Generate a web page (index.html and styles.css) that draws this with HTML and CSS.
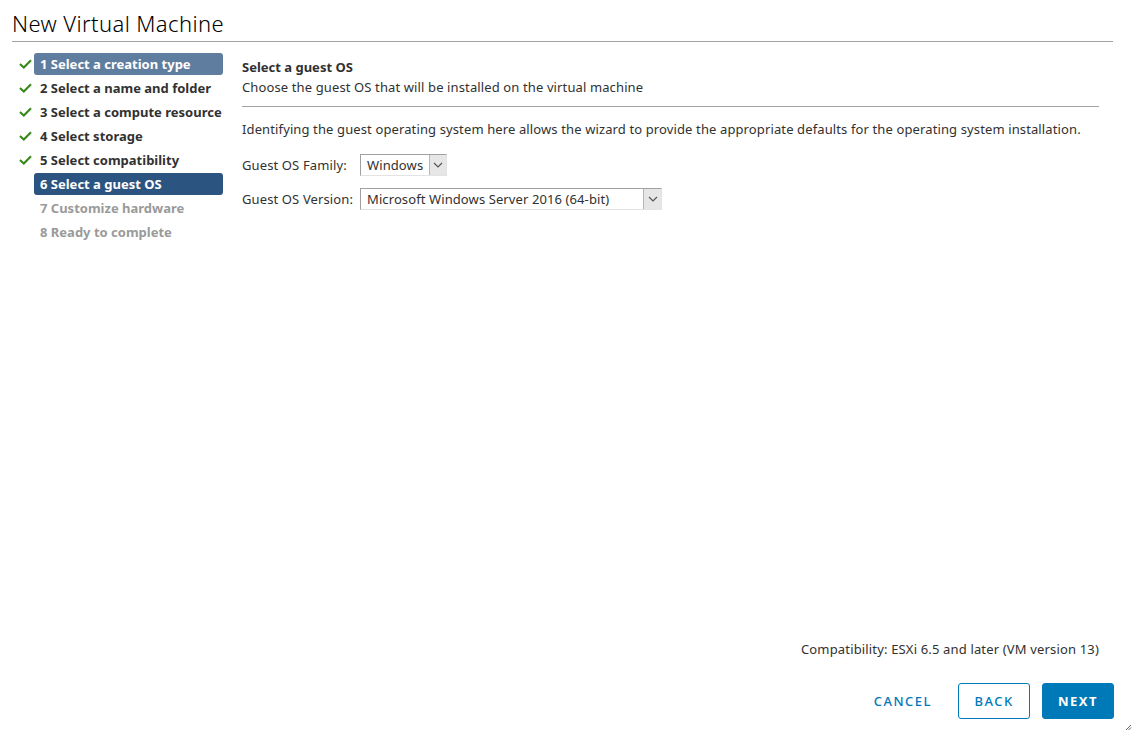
FILE: index.html
```html
<!DOCTYPE html>
<html lang="en">
<head>
  <meta charset="UTF-8">
  <title>New Virtual Machine</title>
  <link rel="stylesheet" href="styles.css">
</head>
<body>
  <div class="modal">
    <header class="modal-header">
      <h1>New Virtual Machine</h1>
    </header>

    <div class="modal-body">
      <!-- pasos del asistente -->
      <ul class="steps">
        <li class="step done current-done"><span class="check"><svg width="13" height="10" viewBox="0 0 13 10"><path d="M1 5 L4.8 8.5 L12 1.2" fill="none" stroke="#3a8a1c" stroke-width="2.2"/></svg></span><span class="label">1 Select a creation type</span></li>
        <li class="step done"><span class="check"><svg width="13" height="10" viewBox="0 0 13 10"><path d="M1 5 L4.8 8.5 L12 1.2" fill="none" stroke="#3a8a1c" stroke-width="2.2"/></svg></span><span class="label">2 Select a name and folder</span></li>
        <li class="step done"><span class="check"><svg width="13" height="10" viewBox="0 0 13 10"><path d="M1 5 L4.8 8.5 L12 1.2" fill="none" stroke="#3a8a1c" stroke-width="2.2"/></svg></span><span class="label">3 Select a compute resource</span></li>
        <li class="step done"><span class="check"><svg width="13" height="10" viewBox="0 0 13 10"><path d="M1 5 L4.8 8.5 L12 1.2" fill="none" stroke="#3a8a1c" stroke-width="2.2"/></svg></span><span class="label">4 Select storage</span></li>
        <li class="step done"><span class="check"><svg width="13" height="10" viewBox="0 0 13 10"><path d="M1 5 L4.8 8.5 L12 1.2" fill="none" stroke="#3a8a1c" stroke-width="2.2"/></svg></span><span class="label">5 Select compatibility</span></li>
        <li class="step active"><span class="check"></span><span class="label">6 Select a guest OS</span></li>
        <li class="step disabled"><span class="check"></span><span class="label">7 Customize hardware</span></li>
        <li class="step disabled"><span class="check"></span><span class="label">8 Ready to complete</span></li>
      </ul>

      <div class="content">
        <div class="page-title">Select a guest OS</div>
        <div class="page-desc">Choose the guest OS that will be installed on the virtual machine</div>
        <p class="intro">Identifying the guest operating system here allows the wizard to provide the appropriate defaults for the operating system installation.</p>

        <div class="form-row">
          <label>Guest OS Family:</label>
          <div class="select family">
            <span class="value">Windows</span>
            <span class="arrow"><svg width="10" height="6" viewBox="0 0 10 6"><path d="M1 1 L5 5 L9 1" fill="none" stroke="#555" stroke-width="1.2"/></svg></span>
          </div>
        </div>
        <div class="form-row">
          <label>Guest OS Version:</label>
          <div class="select version">
            <span class="value">Microsoft Windows Server 2016 (64-bit)</span>
            <span class="arrow"><svg width="10" height="6" viewBox="0 0 10 6"><path d="M1 1 L5 5 L9 1" fill="none" stroke="#555" stroke-width="1.2"/></svg></span>
          </div>
        </div>

        <div class="spacer"></div>
        <div class="compat">Compatibility: ESXi 6.5 and later (VM version 13)</div>
      </div>
    </div>

    <footer class="modal-footer">
      <button class="btn btn-link">CANCEL</button>
      <button class="btn btn-outline">BACK</button>
      <button class="btn btn-primary">NEXT</button>
    </footer>
    <span class="grip"><svg width="7" height="7" viewBox="0 0 7 7"><path d="M6 1 L1 6 M6 3.5 L3.5 6" stroke="#666" stroke-width="1"/></svg></span>
  </div>
</body>
</html>
```

FILE: styles.css
```css
body {
  margin: 0;
  padding: 0;
  background-color: #ffffff;
  font-family: 'Noto Sans', 'DejaVu Sans', sans-serif;
  font-size: 13px;
  color: #313131;
}

.modal {
  position: relative;
  width: 1135px;
  height: 736px;
  display: flex;
  flex-direction: column;
  box-sizing: border-box;
}

/* Header */
.modal-header {
  margin: 0 22px 0 12px;
  border-bottom: 1px solid #a3a3a3;
  height: 41px;
}

.modal-header h1 {
  margin: 0;
  padding-top: 9px;
  font-size: 22px;
  font-weight: 300;
  color: #000000;
  line-height: 28px;
  letter-spacing: 0.4px;
}

.modal-body {
  flex: 1;
  display: flex;
  padding: 11px 0 0 18px;
}

/* Steps */
.steps {
  list-style: none;
  margin: 0;
  padding: 0;
  width: 205px;
  flex: none;
}

.step {
  display: flex;
  align-items: center;
  height: 22px;
  margin-bottom: 2px;
}

.check {
  flex: none;
  width: 16px;
  height: 22px;
  display: flex;
  align-items: center;
  padding-left: 1px;
  box-sizing: border-box;
}

.step .label {
  flex: 1;
  min-width: 0;
  font-weight: bold;
  padding: 0 6px;
  line-height: 22px;
  border-radius: 3px;
  white-space: nowrap;
}

.current-done .label {
  background-color: #5f7d9e;
  color: #ffffff;
}

.active .label {
  background-color: #2c5480;
  color: #ffffff;
}

.disabled .label {
  color: #9a9a9a;
}

/* Content */
.content {
  flex: 1;
  display: flex;
  flex-direction: column;
  margin-left: 19px;
  margin-right: 36px;
  letter-spacing: 0.12px;
}

.page-title {
  font-weight: bold;
  margin-top: 4px;
  line-height: 20px;
  letter-spacing: 0;
}

.page-desc {
  line-height: 20px;
  padding-bottom: 9px;
  border-bottom: 1px solid #a3a3a3;
}

.intro {
  margin: 12px 0 15px 0;
  line-height: 20px;
}

.form-row {
  display: flex;
  align-items: center;
  margin-bottom: 12px;
}

.form-row label {
  width: 118px;
}

.select {
  display: flex;
  height: 22px;
  box-sizing: border-box;
  border: 1px solid #a0a0a0;
  border-right-color: #e3e3e3;
  border-bottom-color: #e3e3e3;
  background-color: #fff;
  letter-spacing: 0.1px;
}

.select .value {
  flex: 1;
  padding: 0 6px;
  line-height: 20px;
}

.select .arrow {
  width: 17px;
  background-color: #e6e6e6;
  border-left: 1px solid #b5b5b5;
  display: flex;
  align-items: center;
  justify-content: center;
}

.family {
  width: 87px;
}

.version {
  width: 302px;
}

.spacer {
  flex: 1;
}

.compat {
  text-align: right;
  margin-bottom: 25px;
  letter-spacing: 0.16px;
}

/* Footer */
.modal-footer {
  display: flex;
  justify-content: flex-end;
  gap: 12px;
  padding: 0 21px 17px 0;
}

.btn {
  height: 36px;
  padding: 0 12px;
  font-family: inherit;
  font-size: 13px;
  font-weight: 500;
  letter-spacing: 1.5px;
  border-radius: 3px;
  cursor: pointer;
  box-sizing: border-box;
}

.btn-link {
  background: none;
  border: none;
  color: #0079b8;
  margin-right: 2px;
}

.btn-outline {
  width: 72px;
  background-color: #fff;
  border: 1px solid #0079b8;
  color: #0079b8;
}

.btn-primary {
  width: 72px;
  background-color: #0079b8;
  border: 1px solid #0079b8;
  color: #fff;
  font-weight: bold;
}

.grip {
  position: absolute;
  right: 3px;
  bottom: 1px;
}
```
